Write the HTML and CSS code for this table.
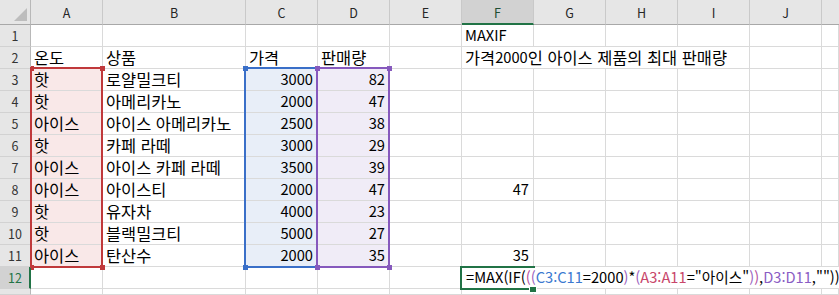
FILE: index.html
```html
<!DOCTYPE html>
<html lang="ko">
<head>
<meta charset="utf-8">
<title>MAXIF</title>
<link rel="stylesheet" href="styles.css">
</head>
<body>
<div class="sheet">
  <div class="corner"><svg width="31" height="25" viewBox="0 0 31 25"><polygon points="27,8 27,21 14,21" fill="#bdbdbd"/></svg></div>
  <div class="ch">A</div><div class="ch">B</div><div class="ch">C</div><div class="ch">D</div><div class="ch">E</div><div class="ch sel">F</div><div class="ch">G</div><div class="ch">H</div><div class="ch">I</div><div class="ch">J</div><div class="ch last"></div>

  <div class="rh">1</div><div class="c"></div><div class="c"></div><div class="c"></div><div class="c"></div><div class="c"></div><div class="c">MAXIF</div><div class="c"></div><div class="c"></div><div class="c"></div><div class="c"></div><div class="c"></div>

  <div class="rh">2</div><div class="c k">온도</div><div class="c k">상품</div><div class="c k">가격</div><div class="c k">판매량</div><div class="c"></div><div class="c k span4">가격<span class="d">2000</span>인 아이스 제품의 최대 판매량</div><div class="c"></div><div class="c"></div>

  <div class="rh">3</div><div class="c k ra">핫</div><div class="c k">로얄밀크티</div><div class="c n rc">3000</div><div class="c n rd">82</div><div class="c"></div><div class="c"></div><div class="c"></div><div class="c"></div><div class="c"></div><div class="c"></div><div class="c"></div>

  <div class="rh">4</div><div class="c k ra">핫</div><div class="c k">아메리카노</div><div class="c n rc">2000</div><div class="c n rd">47</div><div class="c"></div><div class="c"></div><div class="c"></div><div class="c"></div><div class="c"></div><div class="c"></div><div class="c"></div>

  <div class="rh">5</div><div class="c k ra">아이스</div><div class="c k">아이스 아메리카노</div><div class="c n rc">2500</div><div class="c n rd">38</div><div class="c"></div><div class="c"></div><div class="c"></div><div class="c"></div><div class="c"></div><div class="c"></div><div class="c"></div>

  <div class="rh">6</div><div class="c k ra">핫</div><div class="c k">카페 라떼</div><div class="c n rc">3000</div><div class="c n rd">29</div><div class="c"></div><div class="c"></div><div class="c"></div><div class="c"></div><div class="c"></div><div class="c"></div><div class="c"></div>

  <div class="rh">7</div><div class="c k ra">아이스</div><div class="c k">아이스 카페 라떼</div><div class="c n rc">3500</div><div class="c n rd">39</div><div class="c"></div><div class="c"></div><div class="c"></div><div class="c"></div><div class="c"></div><div class="c"></div><div class="c"></div>

  <div class="rh">8</div><div class="c k ra">아이스</div><div class="c k">아이스티</div><div class="c n rc">2000</div><div class="c n rd">47</div><div class="c"></div><div class="c n">47</div><div class="c"></div><div class="c"></div><div class="c"></div><div class="c"></div><div class="c"></div>

  <div class="rh">9</div><div class="c k ra">핫</div><div class="c k">유자차</div><div class="c n rc">4000</div><div class="c n rd">23</div><div class="c"></div><div class="c"></div><div class="c"></div><div class="c"></div><div class="c"></div><div class="c"></div><div class="c"></div>

  <div class="rh">10</div><div class="c k ra">핫</div><div class="c k">블랙밀크티</div><div class="c n rc">5000</div><div class="c n rd">27</div><div class="c"></div><div class="c"></div><div class="c"></div><div class="c"></div><div class="c"></div><div class="c"></div><div class="c"></div>

  <div class="rh">11</div><div class="c k ra">아이스</div><div class="c k">탄산수</div><div class="c n rc">2000</div><div class="c n rd">35</div><div class="c"></div><div class="c n">35</div><div class="c"></div><div class="c"></div><div class="c"></div><div class="c"></div><div class="c"></div>

  <div class="rh selrow">12</div><div class="c"></div><div class="c"></div><div class="c"></div><div class="c"></div><div class="c"></div><div class="c edit"><span>=MAX(IF(</span><span class="p3">(</span><span class="p4">(</span><span class="rfc">C3:C11</span><span>=2000</span><span class="p4">)</span><span>*</span><span class="p4">(</span><span class="rfa">A3:A11</span><span>="아이스"</span><span class="p4">)</span><span class="p3">)</span><span>,</span><span class="rfd">D3:D11</span><span>,""))</span><span class="caret"></span></div>

  <div class="rh"></div><div class="c"></div><div class="c"></div><div class="c"></div><div class="c"></div><div class="c"></div><div class="c"></div><div class="c"></div><div class="c"></div><div class="c"></div><div class="c"></div><div class="c"></div>

  <div class="box box-a"></div>
  <div class="box box-c"></div>
  <div class="box box-d"></div>
  <div class="hnd red" style="left:31px;top:66px;width:3px"></div>
  <div class="hnd red" style="left:100px;top:66px"></div>
  <div class="hnd red" style="left:31px;top:265px;width:3px"></div>
  <div class="hnd red" style="left:100px;top:265px"></div>
  <div class="hnd blue" style="left:243px;top:66px"></div>
  <div class="hnd blue" style="left:243px;top:265px"></div>
  <div class="hnd purple" style="left:315px;top:66px"></div>
  <div class="hnd purple" style="left:387px;top:66px"></div>
  <div class="hnd purple" style="left:315px;top:265px"></div>
  <div class="hnd purple" style="left:387px;top:265px"></div>
  <div class="active"></div>
  <div class="fill-handle"></div>
</div>
</body>
</html>
```

FILE: styles.css
```css
html, body {
  margin: 0;
  padding: 0;
  background: #ffffff;
}

.sheet {
  position: relative;
  width: 839px;
  height: 295px;
  overflow: hidden;
  display: grid;
  grid-template-columns: 31px 72px 143px repeat(8, 72px) 1fr;
  grid-template-rows: 25px repeat(12, 22px) 1fr;
  font-family: "Noto Sans CJK KR", "Noto Sans", sans-serif;
  font-size: 14.67px;
  color: #000;
}

.corner {
  background: #e6e6e6;
  border-right: 1px solid #b8b8b8;
  border-bottom: 1px solid #a8a8a8;
  box-sizing: border-box;
  position: relative;
}
.corner svg {
  position: absolute;
  left: 0;
  top: 0;
}

.ch {
  background: #e6e6e6;
  border-right: 1px solid #c9c9c9;
  border-bottom: 1px solid #a8a8a8;
  box-sizing: border-box;
  display: flex;
  align-items: center;
  justify-content: center;
  font-size: 12.5px;
  color: #262626;
  padding-top: 1px;
}
.ch.sel {
  background: #d2d2d2;
  border-bottom: 2px solid #217346;
  color: #1f4e33;
  padding-top: 2px;
}
.ch.last {
  border-right: none;
}

.rh {
  background: #e6e6e6;
  border-right: 1px solid #b8b8b8;
  border-bottom: 1px solid #d2d2d2;
  box-sizing: border-box;
  display: flex;
  align-items: center;
  justify-content: center;
  font-size: 12.5px;
  color: #333;
}
.rh.selrow {
  background: #d2d2d2;
  border-right: 2px solid #217346;
  color: #217346;
  padding-left: 1px;
}

.c {
  border-right: 1px solid #dadada;
  border-bottom: 1px solid #dadada;
  box-sizing: border-box;
  display: flex;
  align-items: flex-end;
  padding: 0 3px 2px 3px;
  line-height: 18px;
  white-space: nowrap;
  min-width: 0;
}
.c.k {
  font-size: 16.4px;
}
.c.k .d {
  font-size: 14.67px;
}
.c.n {
  justify-content: flex-end;
  padding-right: 4px;
}
.span4 {
  grid-column: span 4;
}

.ra { background: #f9e8e8; }
.rc { background: #e8eef8; }
.rd { background: #f0ecf7; }

.edit {
  grid-column: span 6;
  background: #ffffff;
  border-right: none;
  padding-left: 4px;
}
.p3 { color: #b24f9f; }
.p4 { color: #9b5fc0; }
.rfc { color: #3b79d0; }
.rfa { color: #c8466a; }
.rfd { color: #8a5cc4; }
.caret {
  display: inline-block;
  width: 1px;
  height: 17px;
  background: #000;
  margin-left: 2px;
  align-self: flex-end;
}

.box {
  position: absolute;
  box-sizing: border-box;
  border: 2px solid;
  pointer-events: none;
}
.box-a {
  left: 30px;
  top: 67px;
  width: 73px;
  height: 201px;
  border-color: #c0393b;
}
.box-c {
  left: 244px;
  top: 67px;
  width: 74px;
  height: 201px;
  border-color: #3a6fc8;
}
.box-d {
  left: 316px;
  top: 67px;
  width: 74px;
  height: 201px;
  border-color: #8659bd;
}

.hnd {
  position: absolute;
  width: 5px;
  height: 5px;
}
.hnd.red { background: #c0393b; }
.hnd.blue { background: #3a6fc8; }
.hnd.purple { background: #8659bd; }

.active {
  position: absolute;
  left: 460px;
  top: 266px;
  width: 75px;
  height: 24px;
  box-sizing: border-box;
  border: 2px solid #217346;
  border-right: none;
  pointer-events: none;
}
.fill-handle {
  position: absolute;
  left: 530px;
  top: 287px;
  width: 6px;
  height: 5px;
  background: #217346;
  box-shadow: 0 0 0 1px #ffffff;
}
```
